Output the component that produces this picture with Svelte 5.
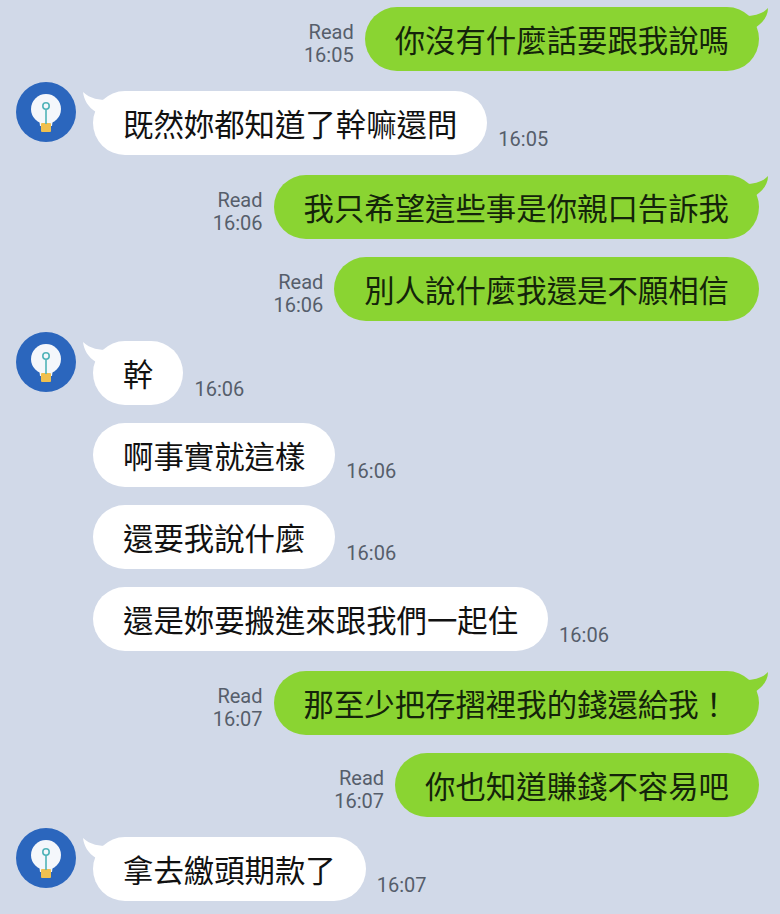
<script>
  const messages = [
    { side: 'out', text: '你沒有什麼話要跟我說嗎', time: '16:05', tail: true },
    { side: 'in', text: '既然妳都知道了幹嘛還問', time: '16:05', tail: true },
    { side: 'out', text: '我只希望這些事是你親口告訴我', time: '16:06', tail: true },
    { side: 'out', text: '別人說什麼我還是不願相信', time: '16:06' },
    { side: 'in', text: '幹', time: '16:06', tail: true },
    { side: 'in', text: '啊事實就這樣', time: '16:06' },
    { side: 'in', text: '還要我說什麼', time: '16:06' },
    { side: 'in', text: '還是妳要搬進來跟我們一起住', time: '16:06' },
    { side: 'out', text: '那至少把存摺裡我的錢還給我！', time: '16:07', tail: true },
    { side: 'out', text: '你也知道賺錢不容易吧', time: '16:07' },
    { side: 'in', text: '拿去繳頭期款了', time: '16:07', tail: true }
  ];
</script>

<main class="chat">
  {#each messages as m}
    <div class="row {m.side}" class:first={m.tail}>
      {#if m.side === 'out'}
        <div class="meta">
          <span>Read</span>
          <span>{m.time}</span>
        </div>
      {:else if m.tail}
        <svg class="avatar" viewBox="0 0 60 60" aria-hidden="true">
          <circle cx="30" cy="30" r="30" fill="#2b66bd" />
          <circle cx="30" cy="27" r="15" fill="#f4f7fb" />
          <path d="M23 36 L37 36 L36 44 L24 44 Z" fill="#f4f7fb" />
          <rect x="25" y="41" width="10" height="9" rx="1" fill="#f0c04f" />
          <path d="M30 27 V42" stroke="#4fb3b8" stroke-width="1.6" fill="none" />
          <circle cx="30" cy="24" r="3.2" fill="#f4f7fb" stroke="#4fb3b8" stroke-width="1.6" />
        </svg>
      {/if}
      <div class="bubble">
        {#if m.tail}
          <svg class="tail" viewBox="0 0 26 22" aria-hidden="true">
            {#if m.side === 'out'}
              <path d="M0 8 C8 8 19 7 25 0 C25 8 20 15 12 20 L0 20 Z" />
            {:else}
              <path d="M26 8 C18 8 8 7 1 0 C2 8 6 15 14 20 L26 20 Z" />
            {/if}
          </svg>
        {/if}
        {m.text}
      </div>
      {#if m.side === 'in'}
        <div class="meta"><span>{m.time}</span></div>
      {/if}
    </div>
  {/each}
</main>

<style>
  :global(body) {
    background: #d1d9e8;
  }

  .chat {
    box-sizing: border-box;
    height: 914px;
    overflow: hidden;
    padding: 7px 21px 0 16px;
    display: flex;
    flex-direction: column;
    font-family: "Noto Sans CJK TC", "Noto Sans", sans-serif;
  }

  .row {
    display: flex;
    align-items: flex-end;
    gap: 11px;
    margin-bottom: 18px;
  }

  .row.first {
    margin-top: 2px;
  }

  .row.first:first-child {
    margin-top: 0;
  }

  .row.out {
    justify-content: flex-end;
  }

  .row.in {
    padding-left: 77px;
  }

  .row.in.first {
    padding-left: 0;
  }

  .avatar {
    width: 60px;
    height: 60px;
    flex: none;
    align-self: flex-start;
    margin: -9px 6px 0 0;
  }

  .bubble {
    position: relative;
    height: 64px;
    padding: 0 30px;
    border-radius: 32px;
    background: #fff;
    color: #111;
    font-size: 30.4px;
    line-height: 64px;
    white-space: nowrap;
  }

  .out .bubble {
    background: #8ad432;
    color: #14240a;
  }

  .tail {
    position: absolute;
    top: 1px;
    width: 26px;
    height: 22px;
    fill: #fff;
  }

  .out .tail {
    right: -10px;
    fill: #8ad432;
  }

  .in .tail {
    left: -11px;
  }

  .meta {
    display: flex;
    flex-direction: column;
    align-items: flex-end;
    padding-bottom: 4px;
    font-family: Roboto, "Liberation Sans", sans-serif;
    font-size: 20px;
    line-height: 23px;
    color: #565e6b;
  }
</style>
